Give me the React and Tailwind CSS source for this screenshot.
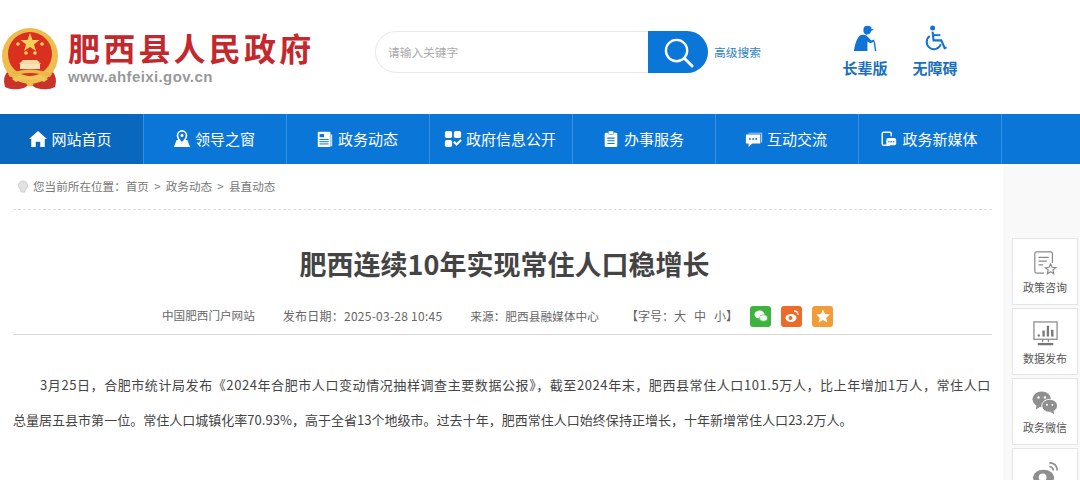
import React from 'react';

const CJK = "font-['Noto_Sans_CJK_SC','Noto_Sans',sans-serif]";

const NAV = [
  { label: '网站首页', icon: 'home', active: true },
  { label: '领导之窗', icon: 'leader' },
  { label: '政务动态', icon: 'news' },
  { label: '政府信息公开', icon: 'info' },
  { label: '办事服务', icon: 'clip' },
  { label: '互动交流', icon: 'chat' },
  { label: '政务新媒体', icon: 'media' },
];

function NavIcon({ name }) {
  const paths = {
    home: <path d="M10 1 L20 10 L17.5 10 L17.5 19 L12.5 19 L12.5 13 L7.5 13 L7.5 19 L2.5 19 L2.5 10 L0 10 Z" fill="#fff" />,
    leader: (
      <>
        <path d="M4 11 L1 19 L19 19 L16 11 L13.5 11 L10 15.5 L6.5 11 Z" fill="#fff" />
        <path d="M10 14.5 Q5 9.5 5 6 A5 5 0 0 1 15 6 Q15 9.5 10 14.5 Z" fill="#0a76d8" stroke="#fff" strokeWidth="1.8" />
        <circle cx="10" cy="6" r="1.7" fill="#fff" />
      </>
    ),
    news: (
      <>
        <rect x="2" y="2" width="14" height="17" rx="1" fill="#fff" />
        <rect x="16" y="5" width="2" height="13" fill="#cfe3f6" />
        <rect x="4" y="4.5" width="5" height="3.5" fill="#0a76d8" />
        <path d="M4 10.5 H14 M4 13 H14 M4 15.5 H14" stroke="#0a76d8" strokeWidth="1.1" />
      </>
    ),
    info: (
      <>
        <rect x="1" y="1" width="8" height="8" rx="2" fill="#fff" />
        <rect x="11" y="1" width="8" height="8" rx="2" fill="#fff" />
        <rect x="1" y="11" width="8" height="8" rx="2" fill="#fff" />
        <path d="M11 13 L14 16 L19 11" fill="none" stroke="#fff" strokeWidth="2.4" />
      </>
    ),
    clip: (
      <>
        <rect x="3" y="3" width="14" height="16" rx="1.5" fill="#fff" />
        <rect x="7" y="1" width="6" height="4" rx="1" fill="#fff" stroke="#0a76d8" strokeWidth="0.6" />
        <path d="M6 9 H14 M6 12 H14 M6 15 H14" stroke="#0a76d8" strokeWidth="1.2" />
      </>
    ),
    chat: (
      <>
        <path d="M4 3 H19 V14 H18 V4 H4 Z" fill="#cfe3f6" />
        <path d="M1 5 H17 V15 H8 L4 19 V15 H1 Z" fill="#fff" />
        <circle cx="5.5" cy="10" r="1" fill="#0a76d8" />
        <circle cx="9" cy="10" r="1" fill="#0a76d8" />
        <circle cx="12.5" cy="10" r="1" fill="#0a76d8" />
      </>
    ),
    media: (
      <>
        <path d="M11 17 H4 Q2.5 17 2.5 15.5 V4 Q2.5 2.5 4 2.5 H11 Q12.5 2.5 12.5 4 V7" fill="none" stroke="#fff" strokeWidth="1.6" />
        <rect x="7" y="9" width="11" height="8" rx="2" fill="#fff" />
        <circle cx="10" cy="13" r="0.9" fill="#0a76d8" />
        <circle cx="12.5" cy="13" r="0.9" fill="#0a76d8" />
        <circle cx="15" cy="13" r="0.9" fill="#0a76d8" />
      </>
    ),
  };
  return (
    <svg viewBox="0 0 20 20" className="w-[18px] h-[18px] shrink-0">
      {paths[name]}
    </svg>
  );
}

function Emblem() {
  return (
    <svg viewBox="0 0 60 64" className="w-[60px] h-[64px] shrink-0">
      <path d="M8 44 Q2 50 5 60 Q12 64 24 61 L30 57 L36 61 Q48 64 55 60 Q58 50 52 44 Z" fill="#c8322a" />
      <circle cx="30" cy="29" r="28" fill="#eebd4e" />
      <circle cx="30" cy="27" r="22" fill="#d9301f" />
      <path d="M30 6 L32.5 13 L39.5 13 L34 17.5 L36 24 L30 20 L24 24 L26 17.5 L20.5 13 L27.5 13 Z" fill="#f4cf5a" />
      <circle cx="18" cy="17" r="1.8" fill="#f4cf5a" />
      <circle cx="42" cy="17" r="1.8" fill="#f4cf5a" />
      <circle cx="26" cy="26" r="1.8" fill="#f4cf5a" />
      <circle cx="35" cy="26" r="1.8" fill="#f4cf5a" />
      <path d="M19 37 L41 37 L37 33 L23 33 Z" fill="#f2d9a0" />
      <rect x="20" y="37" width="20" height="5" fill="#f6e4b8" />
      <path d="M8 47 Q30 38 52 47 L50 50 Q30 42 10 50 Z" fill="#e9b94b" />
      <path d="M12 52 Q20 46 30 50 Q40 46 48 52 L44 55 Q36 50 30 54 Q24 50 16 55 Z" fill="#f0c65d" />
      <circle cx="30" cy="56" r="3.5" fill="#eebd4e" />
    </svg>
  );
}

function SearchIcon() {
  return (
    <svg viewBox="0 0 32 32" className="w-[31px] h-[31px]">
      <circle cx="14" cy="14" r="11" fill="none" stroke="#fff" strokeWidth="2.4" />
      <path d="M22 22 L30 30" stroke="#fff" strokeWidth="3" strokeLinecap="round" />
    </svg>
  );
}

function Elder() {
  return (
    <svg viewBox="0 0 28 28" className="w-[27px] h-[27px]">
      <path d="M12 3 Q13 0 18 1 L20 2 L20 4 L23 5 L20 6 Q19 10 15 10 Q11 9 12 3 Z" fill="#1173d4" />
      <path d="M8 11 Q12 9 15 11 L20 16 L23 15 L23 17 L19 19 L16 17 L16 27 L2 27 Q3 17 8 11 Z" fill="#1173d4" />
      <path d="M23 17 L24.5 27" stroke="#1173d4" strokeWidth="1.4" />
    </svg>
  );
}

function Wheelchair() {
  return (
    <svg viewBox="0 0 28 28" className="w-[27px] h-[27px]" fill="none" stroke="#1173d4">
      <circle cx="11" cy="3" r="2.6" fill="#1173d4" stroke="none" />
      <path d="M11 7 L12 16 L20 16 L23.5 24 L25.5 23.2" strokeWidth="2.2" />
      <path d="M12 10.5 L19 10.5" strokeWidth="2" />
      <path d="M8 11.5 A7.5 7.5 0 1 0 19.5 20" strokeWidth="2" />
    </svg>
  );
}

function SideIcon({ name }) {
  if (name === 'policy') {
    return (
      <svg viewBox="0 0 28 28" className="w-[26px] h-[26px]" fill="none" stroke="#8a8a8a" strokeWidth="1.3">
        <path d="M13 25 H5 Q3 25 3 23 V4 Q3 2 5 2 H20 Q22 2 22 4 V14" />
        <path d="M7 8 H18 M7 12 H16 M7 16 H12" />
        <path d="M20 15 L21.6 18.6 L25.5 19 L22.6 21.6 L23.4 25.5 L20 23.5 L16.6 25.5 L17.4 21.6 L14.5 19 L18.4 18.6 Z" />
      </svg>
    );
  }
  if (name === 'data') {
    return (
      <svg viewBox="0 0 28 28" className="w-[27px] h-[27px]" fill="none" stroke="#8a8a8a" strokeWidth="1.3">
        <rect x="2" y="2" width="24" height="18" />
        <path d="M7 17 V15 M12 17 V11 M16.5 17 V6 M21 17 V10" strokeWidth="2.4" stroke="#777" />
        <path d="M11 20 V23 M17 20 V23" />
        <path d="M6 25 H22" strokeWidth="2.4" stroke="#777" />
      </svg>
    );
  }
  return (
    <svg viewBox="0 0 28 28" className="w-[28px] h-[26px]">
      <ellipse cx="10.5" cy="10" rx="10" ry="8.5" fill="#8f8f8f" />
      <path d="M5 16 L4 21 L9 18 Z" fill="#8f8f8f" />
      <circle cx="7" cy="8" r="1.3" fill="#fff" />
      <circle cx="14" cy="8" r="1.3" fill="#fff" />
      <ellipse cx="19" cy="17" rx="8.5" ry="7" fill="#8f8f8f" stroke="#fff" strokeWidth="1" />
      <path d="M23 22 L24 26 L19.5 23.5 Z" fill="#8f8f8f" />
      <circle cx="16" cy="16" r="1.1" fill="#fff" />
      <circle cx="22" cy="16" r="1.1" fill="#fff" />
    </svg>
  );
}

function SideButton({ icon, label }) {
  return (
    <div className="w-[66px] h-[67px] bg-white border border-[#e6e6e6] flex flex-col items-center pt-[11px] gap-[3px] shrink-0">
      <SideIcon name={icon} />
      <span className="text-[11px] leading-[16px] text-[#555]">{label}</span>
    </div>
  );
}

function Share({ bg, children }) {
  return (
    <span className={`w-[21px] h-[21px] rounded-[3px] flex items-center justify-center ${bg}`}>
      <svg viewBox="0 0 16 16" className="w-[16px] h-[16px]">
        {children}
      </svg>
    </span>
  );
}

export default function App() {
  return (
    <div className={`w-[1080px] h-[480px] overflow-hidden bg-white ${CJK}`}>
      {/* Header */}
      <header className="h-[114px] flex items-start">
        <div className="w-[375px] pt-[27px] flex gap-[8px] shrink-0">
          <Emblem />
          <div className="flex flex-col">
            <div className="text-[32px] leading-[40px] font-bold tracking-[3.2px] text-[#c5282c] whitespace-nowrap">肥西县人民政府</div>
            <div className="font-['Liberation_Sans',sans-serif] text-[15px] leading-[20px] font-bold tracking-[0.4px] text-[#999]">www.ahfeixi.gov.cn</div>
          </div>
        </div>
        <div className="mt-[31px] w-[333px] h-[42px] flex rounded-[21px] border border-[#e8e8e8] shrink-0">
          <div className="flex-1 pl-[12px] text-[11.7px] leading-[40px] text-[#aaa]">请输入关键字</div>
          <div className="w-[60px] -my-px h-[42px] bg-[#0a76d8] rounded-r-[21px] flex items-center justify-center -mr-px">
            <SearchIcon />
          </div>
        </div>
        <a className="ml-[6px] mt-[44px] w-[47px] text-[11.75px] leading-[16px] text-[#2f7fc6] whitespace-nowrap">高级搜索</a>
        <div className="ml-[81px] mt-[25px] w-[46px] flex flex-col items-center gap-[4px]">
          <Elder />
          <span className="text-[15px] leading-[24px] font-bold text-[#1a70bf] whitespace-nowrap">长辈版</span>
        </div>
        <div className="ml-[24px] mt-[25px] w-[46px] flex flex-col items-center gap-[4px]">
          <Wheelchair />
          <span className="text-[15px] leading-[24px] font-bold text-[#1a70bf] whitespace-nowrap">无障碍</span>
        </div>
      </header>

      {/* Nav */}
      <nav className="h-[50px] bg-[#0a76d8] flex">
        {NAV.map((n) => (
          <div
            key={n.label}
            className={`w-[143px] first:w-[144px] h-full pr-[2px] flex items-center justify-center gap-[4px] border-r border-[#3a90e0] ${n.active ? 'bg-[#0968bd]' : ''}`}
          >
            <NavIcon name={n.icon} />
            <span className="text-[15px] text-white whitespace-nowrap">{n.label}</span>
          </div>
        ))}
      </nav>

      <div className="flex h-[316px]">
        {/* Article */}
        <main className="w-[1003px] pl-[13px] pr-[11px] shrink-0">
          <div className="h-[46px] border-b border-dashed border-[#ddd] flex items-center pl-[4px] gap-[4px] text-[11.6px] text-[#777] whitespace-pre">
            <svg viewBox="0 0 12 14" className="w-[12px] h-[14px]">
              <path d="M6 1 A4.5 4.5 0 0 1 10.5 5.5 Q10.5 8 8 10 L8 12 L4 12 L4 10 Q1.5 8 1.5 5.5 A4.5 4.5 0 0 1 6 1 Z" fill="#e2e2e2" stroke="#cfcfcf" />
            </svg>
            <span>您当前所在位置：首页  &gt;  政务动态  &gt;  县直动态</span>
          </div>
          <h1 className="mt-[35px] pl-[4px] text-center text-[27px] leading-[38px] font-bold text-[#444]">肥西连续10年实现常住人口稳增长</h1>
          <div className="mt-[20px] h-[32px] pb-[5px] border-b border-[#d9d9d9] flex items-center pl-[149px] text-[12px] text-[#666] whitespace-nowrap">
            <span className="text-[11.6px]">中国肥西门户网站</span>
            <span className="ml-[28px] tracking-[0.25px]">发布日期：2025-03-28 10:45</span>
            <span className="ml-[28px] text-[11.7px]">来源：肥西县融媒体中心</span>
            <span className="ml-[27px]">【字号：大&nbsp;&nbsp;&nbsp;中&nbsp;&nbsp;&nbsp;小】</span>
            <div className="ml-[12px] flex gap-[10px]">
              <Share bg="bg-[#3fb33f]">
                <ellipse cx="6.5" cy="6.5" rx="5" ry="4" fill="#fff" />
                <ellipse cx="10.5" cy="10" rx="4" ry="3.2" fill="#fff" stroke="#3fb33f" strokeWidth="0.6" />
              </Share>
              <Share bg="bg-[#ee6a2b]">
                <ellipse cx="7" cy="10" rx="5.5" ry="4" fill="#fff" />
                <circle cx="6.5" cy="10" r="2" fill="#ee6a2b" />
                <path d="M10 3 Q14 3 14 7" fill="none" stroke="#fff" strokeWidth="1.3" />
              </Share>
              <Share bg="bg-[#f29c38]">
                <path d="M8 1.5 L10 6 L15 6.5 L11.2 9.7 L12.4 14.5 L8 12 L3.6 14.5 L4.8 9.7 L1 6.5 L6 6 Z" fill="#fff" />
              </Share>
            </div>
          </div>
          <p className="mt-[32px] text-[13px] leading-[35px] text-[#444] whitespace-nowrap">
            <span className="block pl-[27px] tracking-[0.58px]">3月25日，合肥市统计局发布《2024年合肥市人口变动情况抽样调查主要数据公报》，截至2024年末，肥西县常住人口101.5万人，比上年增加1万人，常住人口</span>
            <span className="block tracking-[0.02px]">总量居五县市第一位。常住人口城镇化率70.93%，高于全省13个地级市。过去十年，肥西常住人口始终保持正增长，十年新增常住人口23.2万人。</span>
          </p>
        </main>

        {/* Side rail */}
        <aside className="flex-1 bg-[#f9f9f9] pl-[9px] pt-[74px] flex flex-col gap-[3px] overflow-hidden">
          <SideButton icon="policy" label="政策咨询" />
          <SideButton icon="data" label="数据发布" />
          <SideButton icon="wechat" label="政务微信" />
          <div className="w-[66px] h-[67px] bg-white border border-[#e6e6e6] flex justify-center pt-[11px] shrink-0">
            <svg viewBox="0 0 28 28" className="w-[27px] h-[27px]">
              <ellipse cx="12" cy="18" rx="11" ry="8" fill="#8f8f8f" />
              <circle cx="11" cy="18" r="4" fill="#fff" />
              <path d="M18 3 Q26 3 26 11 M18 7 Q22 7 22 11" fill="none" stroke="#8f8f8f" strokeWidth="1.8" />
            </svg>
          </div>
        </aside>
      </div>
    </div>
  );
}
